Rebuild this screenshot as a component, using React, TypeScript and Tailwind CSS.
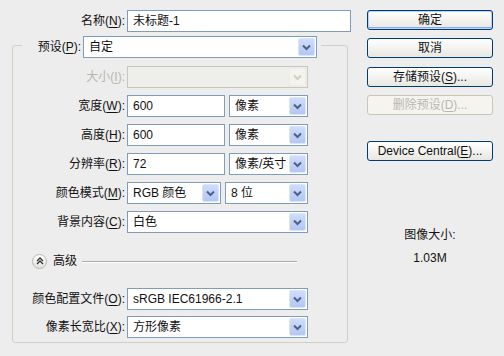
import type { ReactNode } from "react";

const FONT = "font-['Liberation_Sans','Noto_Sans_CJK_SC',sans-serif]";

const Label = ({
  text,
  hotkey,
  disabled = false,
}: {
  text: string;
  hotkey: string;
  disabled?: boolean;
}) => (
  <span className={`whitespace-nowrap ${disabled ? "text-[#b9b7ad]" : "text-[#111]"}`}>
    {text}(<span className="underline underline-offset-2">{hotkey}</span>):
  </span>
);

const DropArrow = ({ disabled = false }: { disabled?: boolean }) => (
  <span
    className={`flex h-full w-[17px] items-center justify-center rounded-[2px] border ${
      disabled
        ? "border-[#ecebe6] bg-[#f4f3ee]"
        : "border-[#dce6fb] bg-gradient-to-b from-[#cfdcfc] to-[#b3c7f4]"
    }`}
  >
    <svg width="9" height="7" viewBox="0 0 9 7">
      <path
        d="M1 1.5 L4.5 5 L8 1.5"
        stroke={disabled ? "#cfcdc4" : "#4d6185"}
        strokeWidth="2"
        fill="none"
      />
    </svg>
  </span>
);

const Select = ({
  value,
  width,
  disabled = false,
}: {
  value: string;
  width: string;
  disabled?: boolean;
}) => (
  <div
    className={`flex h-[22px] items-center border p-[1px] ${width} ${
      disabled ? "border-[#c9c7ba] bg-[#eeeeea]" : "border-[#7f9db9] bg-white"
    }`}
  >
    <span className="flex-1 truncate pl-[4px]">{value}</span>
    <DropArrow disabled={disabled} />
  </div>
);

const TextInput = ({ value, width }: { value: string; width: string }) => (
  <div className={`flex h-[22px] items-center border border-[#7f9db9] bg-white pl-[5px] ${width}`}>
    {value}
  </div>
);

const Row = ({ label, children }: { label: ReactNode; children: ReactNode }) => (
  <div className="flex h-[22px] items-center">
    <div className="w-[114px] pr-[2px] text-right">{label}</div>
    <div className="flex gap-[4px]">{children}</div>
  </div>
);

const Button = ({
  children,
  mt,
  primary = false,
  disabled = false,
}: {
  children: ReactNode;
  mt: string;
  primary?: boolean;
  disabled?: boolean;
}) => (
  <div
    className={`flex h-[20px] w-[126px] items-center justify-center rounded-[3px] border ${mt} ${
      disabled
        ? "border-[#c9c7ba] bg-[#f5f4ef] text-[#b9b7ad]"
        : "border-[#003c74] bg-gradient-to-b from-white to-[#e8e7e1] text-[#111]"
    } ${primary ? "shadow-[inset_0_0_0_1px_#b9d0f7,inset_0_-1px_0_1px_#89aee8]" : ""}`}
  >
    {children}
  </div>
);

export default function App() {
  return (
    <div className={`flex h-[356px] w-[504px] bg-[#ededed] text-[12px] leading-[16px] text-[#111] ${FONT}`}>
      <div className="w-[360px]">
        <div className="mt-[10px] flex h-[22px] items-center">
          <div className="w-[127px] pr-[2px] text-right">
            <Label text="名称" hotkey="N" />
          </div>
          <TextInput value="未标题-1" width="w-[224px]" />
        </div>

        <fieldset className="ml-[12px] w-[336px] rounded-[3px] border border-[#cfcfc6] pb-[4px]">
          <legend className="ml-[9px] flex items-center pr-[4px] pt-[4px]">
            <span className="w-[61px] pr-[2px] text-right">
              <Label text="预设" hotkey="P" />
            </span>
            <Select value="自定" width="w-[234px]" />
          </legend>

          <div className="mt-[8px] flex flex-col gap-[7px]">
            <Row label={<Label text="大小" hotkey="I" disabled />}>
              <Select value="" width="w-[181px]" disabled />
            </Row>
            <Row label={<Label text="宽度" hotkey="W" />}>
              <TextInput value="600" width="w-[98px]" />
              <Select value="像素" width="w-[79px]" />
            </Row>
            <Row label={<Label text="高度" hotkey="H" />}>
              <TextInput value="600" width="w-[98px]" />
              <Select value="像素" width="w-[79px]" />
            </Row>
            <Row label={<Label text="分辨率" hotkey="R" />}>
              <TextInput value="72" width="w-[98px]" />
              <Select value="像素/英寸" width="w-[79px]" />
            </Row>
            <Row label={<Label text="颜色模式" hotkey="M" />}>
              <Select value="RGB 颜色" width="w-[94px]" />
              <Select value="8 位" width="w-[83px]" />
            </Row>
            <Row label={<Label text="背景内容" hotkey="C" />}>
              <Select value="白色" width="w-[181px]" />
            </Row>
          </div>

          <div className="mt-[20px] flex h-[16px] items-center">
            <span className="ml-[19px] flex h-[15px] w-[15px] items-center justify-center rounded-full border border-[#b5b5b0] bg-gradient-to-b from-white to-[#e2e2dc]">
              <svg width="8" height="8" viewBox="0 0 8 8">
                <path d="M1 4 L4 1 L7 4 M1 7 L4 4 L7 7" stroke="#333" strokeWidth="1.3" fill="none" />
              </svg>
            </span>
            <span className="ml-[6px]">高级</span>
            <span className="ml-[5px] h-px w-[215px] bg-[#a9a9a9] shadow-[0_1px_0_#fff]" />
          </div>

          <div className="mt-[19px] flex flex-col gap-[6px]">
            <Row label={<Label text="颜色配置文件" hotkey="O" />}>
              <Select value="sRGB IEC61966-2.1" width="w-[181px]" />
            </Row>
            <Row label={<Label text="像素长宽比" hotkey="X" />}>
              <Select value="方形像素" width="w-[181px]" />
            </Row>
          </div>
        </fieldset>
      </div>

      <div className="flex w-[144px] flex-col pl-[7px]">
        <Button mt="mt-[10px]" primary>
          确定
        </Button>
        <Button mt="mt-[8px]">取消</Button>
        <Button mt="mt-[9px]">
          存储预设(<span className="underline underline-offset-2">S</span>)...
        </Button>
        <Button mt="mt-[8px]" disabled>
          删除预设(<span className="underline underline-offset-2">D</span>)...
        </Button>
        <Button mt="mt-[26px]">
          Device Central(<span className="underline underline-offset-2">E</span>)...
        </Button>
        <div className="mt-[66px] w-[126px] text-center">图像大小:</div>
        <div className="mt-[7px] w-[126px] text-center">1.03M</div>
      </div>
    </div>
  );
}
